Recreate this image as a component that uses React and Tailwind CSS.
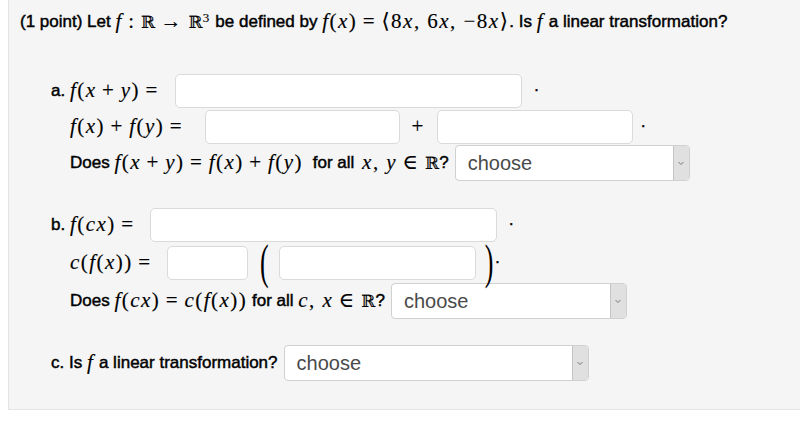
import React from "react";

const serif = { fontFamily: '"Liberation Serif", "DejaVu Serif", serif' };

// inline math with TeX-ish spacing
function M({ children, className = "" }) {
  return (
    <span
      className={`text-[21px] font-normal tracking-[0.07em] [-webkit-text-stroke:0.15px] ${className}`}
      style={serif}
    >
      {children}
    </span>
  );
}

function V({ children }) {
  return <i className="italic">{children}</i>;
}

function Bin({ children }) {
  return <span className="mx-[0.26em]">{children}</span>;
}

function Rel({ children }) {
  return <span className="mx-[0.26em]">{children}</span>;
}

function R({ size = "text-[17px]" }) {
  return (
    <span style={{ fontFamily: '"DejaVu Serif", serif' }} className={`${size} tracking-normal`}>
      ℝ
    </span>
  );
}

function Box({ w }) {
  return <div className={`h-[34px] ${w} bg-white border border-[#dadada] rounded-[5px] shrink-0`} />;
}

function Choose({ w }) {
  return (
    <div className={`h-[36px] ${w} bg-white border border-[#d0d0d0] rounded-[4px] flex shrink-0 overflow-hidden [-webkit-text-stroke:0px]`}>
      <div className="flex-1 flex items-center pl-[12px] text-[20px] text-[#4a4a4a] font-normal">choose</div>
      <div className="w-[16px] bg-[#e0e0e0] border-l border-[#c4c4c4] flex items-center justify-center">
        <svg width="8" height="6" viewBox="0 0 8 6">
          <path d="M1.5 2 L4 4.5 L6.5 2" fill="none" stroke="#777" strokeWidth="1" />
        </svg>
      </div>
    </div>
  );
}

function Dot({ ml = "ml-[12px]" }) {
  return <span className={`text-[16px] ${ml} mb-[10px]`}>.</span>;
}

function BigParen({ children, className = "" }) {
  return (
    <span
      className={`inline-block text-[26px] leading-none scale-y-[1.9] font-normal [-webkit-text-stroke:0px] ${className}`}
      style={serif}
    >
      {children}
    </span>
  );
}

export default function App() {
  return (
    <div className="w-[800px] h-[426px] bg-white" style={{ fontFamily: '"Liberation Sans", Arial, sans-serif' }}>
      <div className="ml-2 h-[410px] bg-[#f5f5f5] border-l border-b border-[#e4e4e4] pl-[11px] pt-[10px] text-[17px] text-black [-webkit-text-stroke:0.45px]">
        {/* question */}
        <div className="h-[24px] flex items-center whitespace-pre">
          <span>(1 point) Let </span>
          <M>
            <V>f</V><Rel>:</Rel><R /><Rel>→</Rel><R />
            <sup className="text-[13px]">3</sup>
          </M>
          <span> be defined by </span>
          <M>
            <V>f</V>(<V>x</V>)<Rel>=</Rel>⟨8<V>x</V>, 6<V>x</V>, −8<V>x</V>⟩
          </M>
          <span>. Is </span>
          <M><V>f</V></M>
          <span> a linear transformation?</span>
        </div>

        {/* part a */}
        <div className="mt-[39px] pl-[31px]">
          <div className="h-9 flex items-center whitespace-pre">
            <span>a. </span>
            <M className="mr-[11px]">
              <V>f</V>(<V>x</V><Bin>+</Bin><V>y</V>)<Rel>=</Rel>
            </M>
            <Box w="w-[347px]" />
            <Dot />
          </div>
          <div className="h-9 flex items-center whitespace-pre pl-[19px]">
            <M className="mr-[16px]">
              <V>f</V>(<V>x</V>)<Bin>+</Bin><V>f</V>(<V>y</V>)<Rel>=</Rel>
            </M>
            <Box w="w-[195px]" />
            <M className="mx-[12px]">+</M>
            <Box w="w-[196px]" />
            <Dot ml="ml-[8px]" />
          </div>
          <div className="h-9 flex items-center whitespace-pre pl-[19px]">
            <span>Does </span>
            <M>
              <V>f</V>(<V>x</V><Bin>+</Bin><V>y</V>)<Rel>=</Rel><V>f</V>(<V>x</V>)<Bin>+</Bin><V>f</V>(<V>y</V>)
            </M>
            <span className="ml-[5px]"> for all </span>
            <M className="ml-[3px]">
              <V>x</V>, <V>y</V><Rel>∈</Rel><R />
            </M>
            <span className="mr-[6px]">?</span>
            <Choose w="w-[235px]" />
          </div>
        </div>

        {/* part b */}
        <div className="mt-[26px] pl-[31px]">
          <div className="h-9 flex items-center whitespace-pre">
            <span>b. </span>
            <M className="mr-[10px]">
              <V>f</V>(<V>cx</V>)<Rel>=</Rel>
            </M>
            <Box w="w-[347px]" />
            <Dot />
          </div>
          <div className="h-[40px] flex items-center whitespace-pre pl-[19px]">
            <M className="mr-[10px]">
              <V>c</V>(<V>f</V>(<V>x</V>))<Rel>=</Rel>
            </M>
            <Box w="w-[81px]" />
            <BigParen className="ml-[12px] mr-[10px]">(</BigParen>
            <Box w="w-[197px]" />
            <BigParen className="ml-[9px]">)</BigParen>
            <Dot ml="ml-[2px]" />
          </div>
          <div className="h-9 flex items-center whitespace-pre pl-[19px]">
            <span>Does </span>
            <M>
              <V>f</V>(<V>cx</V>)<Rel>=</Rel><V>c</V>(<V>f</V>(<V>x</V>))
            </M>
            <span> for all </span>
            <M>
              <V>c</V>, <V>x</V><Rel>∈</Rel><R />
            </M>
            <span className="mr-[6px]">?</span>
            <Choose w="w-[236px]" />
          </div>
        </div>

        {/* part c */}
        <div className="mt-[26px] pl-[31px]">
          <div className="h-9 flex items-center whitespace-pre">
            <span>c. Is </span>
            <M><V>f</V></M>
            <span className="mr-[6px]"> a linear transformation?</span>
            <Choose w="w-[305px]" />
          </div>
        </div>
      </div>
    </div>
  );
}
